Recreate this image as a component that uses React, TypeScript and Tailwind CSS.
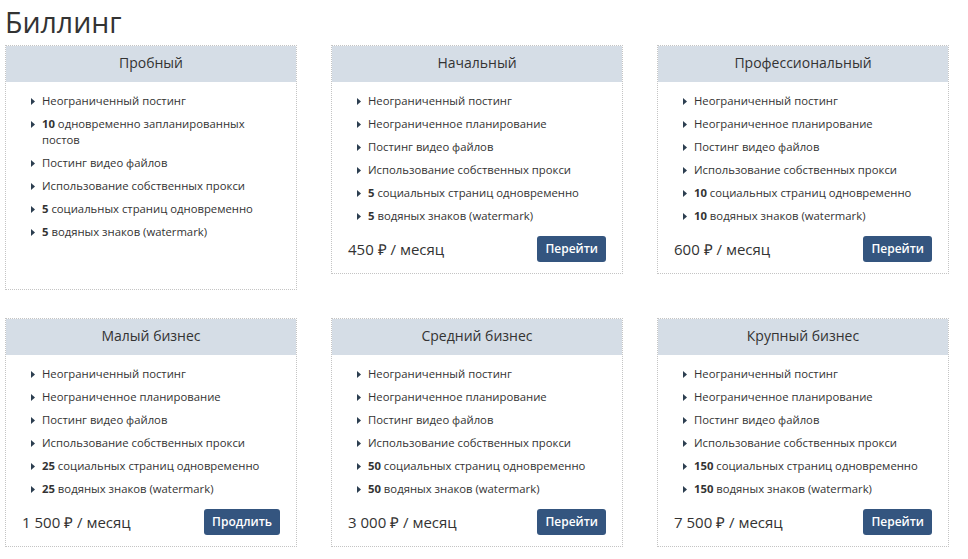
import React from "react";

type Plan = {
  title: string;
  items: React.ReactNode[];
  price?: string;
  action?: string;
};

const base = [
  "Неограниченный постинг",
  "Неограниченное планирование",
  "Постинг видео файлов",
  "Использование собственных прокси",
];

function limits(n: string) {
  return [
    <>
      <b className="font-bold">{n}</b> социальных страниц одновременно
    </>,
    <>
      <b className="font-bold">{n}</b> водяных знаков (watermark)
    </>,
  ];
}

const plans: Plan[] = [
  {
    title: "Пробный",
    items: [
      "Неограниченный постинг",
      <>
        <b className="font-bold">10</b> одновременно запланированных постов
      </>,
      "Постинг видео файлов",
      "Использование собственных прокси",
      ...limits("5"),
    ],
  },
  { title: "Начальный", items: [...base, ...limits("5")], price: "450 ₽ / месяц", action: "Перейти" },
  { title: "Профессиональный", items: [...base, ...limits("10")], price: "600 ₽ / месяц", action: "Перейти" },
  { title: "Малый бизнес", items: [...base, ...limits("25")], price: "1 500 ₽ / месяц", action: "Продлить" },
  { title: "Средний бизнес", items: [...base, ...limits("50")], price: "3 000 ₽ / месяц", action: "Перейти" },
  { title: "Крупный бизнес", items: [...base, ...limits("150")], price: "7 500 ₽ / месяц", action: "Перейти" },
];

function Bullet() {
  return (
    <svg width="4" height="7" viewBox="0 0 4 7" className="mt-[5px] shrink-0">
      <path d="M0 0 L4 3.5 L0 7 Z" fill="#2c3e50" />
    </svg>
  );
}

function PlanCard({ plan }: { plan: Plan }) {
  return (
    <div className="border border-dotted border-[#c4c4c4] bg-white">
      <div className="h-[36px] bg-[#d5dde6] flex items-center justify-center text-[14px] leading-[20px] pb-[2px] text-[#333]">
        {plan.title}
      </div>
      <ul className="pt-[11px] pl-[25px] pr-[16px] flex flex-col gap-[7px]">
        {plan.items.map((item, i) => (
          <li key={i} className="flex gap-[7px] text-[11.3px] leading-[16px] text-[#333]">
            <Bullet />
            <span>{item}</span>
          </li>
        ))}
      </ul>
      <div className="mt-[12px] mb-[11px] h-[26px] px-[16px] flex items-center justify-between">
        {plan.price && <span className="text-[15px] text-[#333]">{plan.price}</span>}
        {plan.action && (
          <button className="h-[26px] px-[8px] rounded-[3px] bg-[#34557f] text-white text-[12px] font-semibold">
            {plan.action}
          </button>
        )}
      </div>
    </div>
  );
}

export default function App() {
  return (
    <div className="w-[968px] h-[559px] bg-white pl-[5px] font-['Open_Sans',sans-serif] overflow-hidden">
      <h1 className="mt-[7px] mb-[7px] text-[28.5px] leading-[31px] text-[#333]">Биллинг</h1>
      <div className="grid grid-cols-[292px_292px_292px] gap-x-[34px] gap-y-[28px] items-start">
        {plans.map((p) => (
          <PlanCard key={p.title} plan={p} />
        ))}
      </div>
    </div>
  );
}
